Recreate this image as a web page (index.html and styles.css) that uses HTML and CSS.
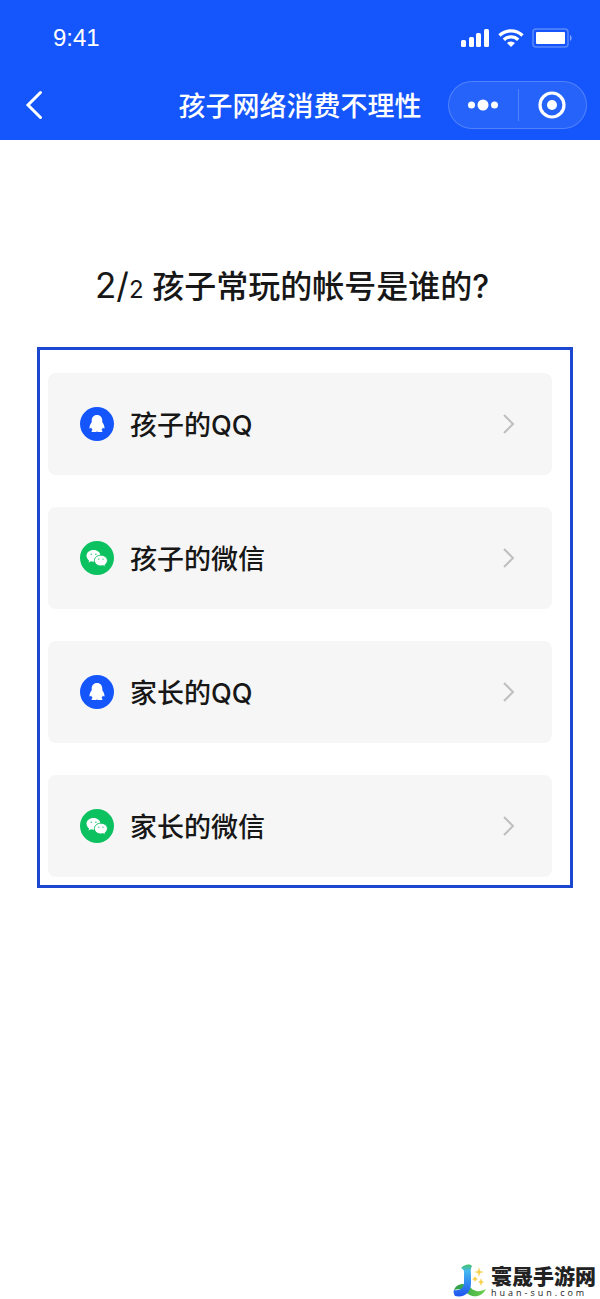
FILE: index.html
```html
<!DOCTYPE html>
<html lang="zh-CN">
<head>
    <meta charset="UTF-8">
    <meta name="viewport" content="width=device-width, initial-scale=1.0">
    <title>孩子网络消费不理性</title>
    <link rel="stylesheet" href="styles.css">
</head>
<body>
    <!-- 图标 -->
    <svg class="sprite" aria-hidden="true">
        <symbol id="icon-qq" viewBox="0 0 34 34">
            <circle cx="17" cy="17" r="17" fill="#1456fb"/>
            <path fill="#fff" d="M17 8c-3.500 0-5.300 2.500-5.300 5.600v1.700c-1.200 1.700-2.300 4-2.200 5.700.1 1 .9.500 1.700-.5.300 1 .8 1.900 1.500 2.600-.8.400-1.200.8-1.200 1.300 0 .8 4.300.9 5.500.1 1.200.8 5.500.7 5.500-.1 0-.5-.4-.9-1.200-1.300.7-.7 1.200-1.600 1.500-2.600.8 1 1.600 1.500 1.700.5.100-1.700-1-4-2.200-5.700v-1.700C22.300 10.500 20.500 8 17 8z"/>
        </symbol>
        <symbol id="icon-wechat" viewBox="0 0 34 34">
            <circle cx="17" cy="17" r="17" fill="#0cc160"/>
            <path fill="#fff" d="M13.500 9C9.500 9 6.500 11.600 6.500 14.800c0 1.900 1 3.500 2.600 4.600l-.6 2.100 2.400-1.200c.8.200 1.700.4 2.600.4 4 0 7-2.700 7-5.900S17.500 9 13.500 9z"/>
            <path fill="#fff" stroke="#0cc160" d="M20.900 14.200c-3.600 0-6.500 2.400-6.500 5.400s2.900 5.400 6.500 5.400c.8 0 1.500-.1 2.200-.3l2.400 1.200-.6-2c1.500-1 2.500-2.500 2.500-4.300 0-3-2.900-5.400-6.500-5.400z"/>
            <g fill="#0cc160">
                <circle cx="11.200" cy="13.200" r="0.700"/>
                <circle cx="15.900" cy="13.200" r="0.700"/>
                <circle cx="18.800" cy="18.200" r="0.600"/>
                <circle cx="23" cy="18.200" r="0.600"/>
            </g>
        </symbol>
        <symbol id="icon-arrow" viewBox="0 0 14 22">
            <path d="M2 2l9 9-9 9" fill="none" stroke="#bfbfbf" stroke-width="2"/>
        </symbol>
    </svg>

    <header class="header">
        <div class="status-bar">
            <span class="time">9:41</span>
            <div class="status-icons">
                <svg width="29" height="18" viewBox="0 0 29 18" fill="#fff">
                    <rect x="0" y="11" width="5" height="7" rx="1.500"/>
                    <rect x="8" y="8" width="5" height="10" rx="1.500"/>
                    <rect x="15" y="4" width="5" height="14" rx="1.500"/>
                    <rect x="23" y="0" width="5" height="18" rx="1.500"/>
                </svg>
                <svg width="26" height="18" viewBox="0 0 26 18" fill="none" stroke="#fff" stroke-width="3.400">
                    <path d="M1.500 6.500a16.500 16.500 0 0 1 23 0"/>
                    <path d="M5.800 10.800a10.300 10.300 0 0 1 14.400 0"/>
                    <path d="M13 18l-4-4a5.800 5.800 0 0 1 8 0z" fill="#fff" stroke="none"/>
                </svg>
                <svg width="40" height="20" viewBox="0 0 40 20">
                    <rect x="1" y="1" width="35" height="18" rx="3" fill="none" stroke="#fff" stroke-opacity="0.300" stroke-width="1.500"/>
                    <rect x="4" y="4" width="29" height="12" rx="1" fill="#fff"/>
                    <path d="M38 7c2 1 2 5 0 6z" fill="#fff" fill-opacity="0.500"/>
                </svg>
            </div>
        </div>
        <nav class="nav-bar">
            <button class="back" type="button" aria-label="返回">
                <svg width="18" height="30" viewBox="0 0 18 30">
                    <path d="M15.500 2.500L3 15l12.500 12.500" fill="none" stroke="#fff" stroke-width="3" stroke-linecap="round"/>
                </svg>
            </button>
            <h1 class="title">孩子网络消费不理性</h1>
            <div class="capsule">
                <button type="button" aria-label="更多">
                    <svg width="32" height="12" viewBox="0 0 32 12" fill="#fff">
                        <circle cx="4.500" cy="6" r="3.500"/>
                        <circle cx="16" cy="6" r="5.500"/>
                        <circle cx="27.500" cy="6" r="3.500"/>
                    </svg>
                </button>
                <button type="button" aria-label="关闭">
                    <svg width="28" height="28" viewBox="0 0 28 28">
                        <circle cx="14" cy="14" r="12" fill="none" stroke="#fff" stroke-width="3.200"/>
                        <circle cx="14" cy="14" r="5" fill="#fff"/>
                    </svg>
                </button>
            </div>
        </nav>
    </header>

    <main class="content">
        <h2 class="question"><span class="step">2/<small>2</small></span> 孩子常玩的帐号是谁的?</h2>
        <div class="options">
            <button class="option" type="button">
                <svg class="icon"><use href="#icon-qq"/></svg>
                <span class="label">孩子的QQ</span>
                <svg class="arrow"><use href="#icon-arrow"/></svg>
            </button>
            <button class="option" type="button">
                <svg class="icon"><use href="#icon-wechat"/></svg>
                <span class="label">孩子的微信</span>
                <svg class="arrow"><use href="#icon-arrow"/></svg>
            </button>
            <button class="option" type="button">
                <svg class="icon"><use href="#icon-qq"/></svg>
                <span class="label">家长的QQ</span>
                <svg class="arrow"><use href="#icon-arrow"/></svg>
            </button>
            <button class="option" type="button">
                <svg class="icon"><use href="#icon-wechat"/></svg>
                <span class="label">家长的微信</span>
                <svg class="arrow"><use href="#icon-arrow"/></svg>
            </button>
        </div>
    </main>

    <footer class="footer">
        <svg width="34" height="34" viewBox="0 0 34 34">
            <defs>
                <linearGradient id="body" x1="0" y1="0" x2="0" y2="1">
                    <stop offset="0" stop-color="#43c463"/>
                    <stop offset="0.200" stop-color="#45b8f0"/>
                    <stop offset="1" stop-color="#1f55f0"/>
                </linearGradient>
                <linearGradient id="tail" x1="0" y1="0" x2="1" y2="0">
                    <stop offset="0" stop-color="#2a9d4a"/>
                    <stop offset="1" stop-color="#6fd04c"/>
                </linearGradient>
            </defs>
            <path fill="url(#tail)" d="M1 26c3-7 12-8 17-2 4 4 9 4 15 1-4 8-12 9-18 5-5-4-9-6-14-4z"/>
            <path fill="url(#body)" d="M8 4c3-3 8-5 11-2-2 3-1 6-1 9v8c0 9-6 15-16 13-1-2-2-4-1-6 6 1 10-2 10-8V8c0-2-1-3-3-4z"/>
            <path fill="#f9d04a" d="M26 3l1 4 4 1-4 1-1 4-1-4-4-1 4-1zM22 12l1 2 2 1-2 1-1 2-1-2-2-1 2-1zM28 14l1 3 2 1-2 1-1 3-1-3-2-1 2-1z"/>
        </svg>
        <div class="brand">
            <strong>寰晟手游网</strong>
            <span>huan-sun.com</span>
        </div>
    </footer>
</body>
</html>
```

FILE: styles.css
```css
* {
    box-sizing: border-box;
}
body {
    display: flex;
    flex-direction: column;
    min-height: 100vh;
    margin: 0;
    background-color: #fff;
    color: #171717;
    font-family: Inter, "Noto Sans CJK SC", sans-serif;
}
button {
    padding: 0;
    border: none;
    background: none;
    color: inherit;
    font: inherit;
    cursor: pointer;
}
svg {
    display: block;
    flex-shrink: 0;
}
.sprite {
    position: absolute;
    width: 0;
    height: 0;
}
.header {
    padding-bottom: 8px;
    background-color: #1456fb;
    color: #fff;
}
.status-bar {
    display: flex;
    align-items: center;
    justify-content: space-between;
    height: 76px;
    padding: 0 28px 0 53px;
}
.time {
    font-family: "Liberation Sans", sans-serif;
    font-size: 24px;
}
.status-icons {
    display: flex;
    align-items: center;
    gap: 8px;
}
.nav-bar {
    display: grid;
    grid-template-columns: 1fr auto 1fr;
    align-items: center;
    height: 56px;
    padding: 2px 13px 0;
}
.back {
    justify-self: start;
    padding: 0 12px;
}
.title {
    margin: 0;
    padding-top: 4px;
    font-size: 27px;
    font-weight: 500;
    line-height: 40px;
}
.capsule {
    display: flex;
    justify-self: end;
    width: 139px;
    height: 48px;
    border: 1px solid rgba(255, 255, 255, 0.2);
    border-radius: 24px;
    background-color: rgba(255, 255, 255, 0.08);
}
.capsule button {
    display: flex;
    flex: 1;
    align-items: center;
    justify-content: center;
}
.capsule button + button {
    justify-content: flex-start;
}
.capsule button + button::before {
    content: "";
    width: 1px;
    height: 32px;
    margin-right: 19px;
    background-color: rgba(255, 255, 255, 0.2);
}
.content {
    flex: 1;
    padding: 123px 27px 0 37px;
}
.question {
    margin: 0 0 36px;
    padding-left: 58px;
    font-size: 32px;
    font-weight: 500;
    line-height: 48px;
}
.step {
    font-size: 35px;
    font-weight: 400;
    line-height: 1;
}
.step small {
    font-size: 24px;
}
.options {
    display: flex;
    flex-direction: column;
    gap: 32px;
    padding: 23px 18px 8px 8px;
    border: 3px solid #1b48cf;
}
.option {
    display: flex;
    align-items: center;
    height: 102px;
    padding: 0 36px 0 32px;
    border-radius: 8px;
    background-color: #f6f6f6;
    text-align: left;
}
.icon {
    width: 34px;
    height: 34px;
}
.label {
    flex: 1;
    margin-left: 16px;
    padding-top: 4px;
    font-size: 27px;
    font-weight: 500;
    line-height: 40px;
}
.arrow {
    width: 14px;
    height: 22px;
}
.footer {
    display: flex;
    align-items: center;
    justify-content: flex-end;
    gap: 4px;
    padding: 0 4px;
}
.brand {
    display: flex;
    flex-direction: column;
    color: #222;
}
.brand strong {
    font-family: "Noto Sans CJK SC", sans-serif;
    font-size: 21px;
    font-weight: 900;
    line-height: 24px;
}
.brand span {
    font-family: "Open Sans", sans-serif;
    font-size: 9px;
    line-height: 12px;
    letter-spacing: 3px;
}
```
